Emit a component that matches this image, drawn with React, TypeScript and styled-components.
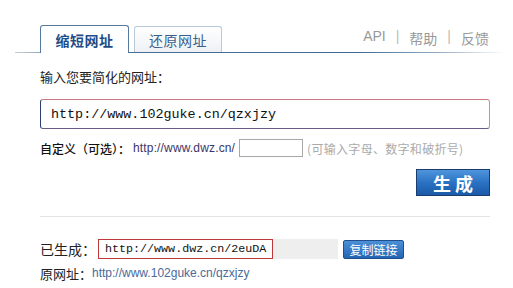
import styled, { createGlobalStyle } from "styled-components";

const GlobalStyle = createGlobalStyle`
    body {
        margin: 0;
        background: #fff;
        font-family: "Noto Sans CJK SC", "Liberation Sans", sans-serif;
        color: #222;
    }
`;

const Page = styled.div`
    width: 513px;
    height: 288px;
    overflow: hidden;
`;

const Header = styled.div`
    display: flex;
    align-items: flex-end;
    margin-left: 15px;
    width: 490px;
    height: 53px;
    padding-left: 25px;
    box-sizing: border-box;
    background: linear-gradient(to right, #c8d0d8 0%, #4a6f96 12%, #3f6893 70%, #9fb4c8 88%, #ffffff 100%) left bottom / 100% 1px no-repeat;
`;

const Tab = styled.div<{ active?: boolean }>`
    display: flex;
    align-items: center;
    justify-content: center;
    box-sizing: border-box;
    width: ${(p) => (p.active ? "89px" : "88px")};
    height: ${(p) => (p.active ? "28px" : "26px")};
    margin-right: 5px;
    margin-bottom: ${(p) => (p.active ? "0" : "1px")};
    border: 1px solid ${(p) => (p.active ? "#58799e" : "#b9c9d8")};
    border-bottom: none;
    border-radius: 3px 3px 0 0;
    background: ${(p) => (p.active ? "#fff" : "linear-gradient(#ffffff, #eef1f4)")};
    color: ${(p) => (p.active ? "#1e4c86" : "#3a5f8e")};
    font-size: 14px;
    font-weight: ${(p) => (p.active ? "bold" : "normal")};
    letter-spacing: 0.5px;
`;

const Links = styled.div`
    margin-left: auto;
    margin-right: 16px;
    margin-bottom: 5px;
    display: flex;
    gap: 10px;
    color: #999;
    font-size: 14px;
    font-family: "Liberation Sans", "Noto Sans CJK SC", sans-serif;
`;

const Sep = styled.span`
    color: #bbb;
`;

const Content = styled.div`
    padding-left: 40px;
    width: 450px;
`;

const Label = styled.div`
    margin-top: 15px;
    font-size: 13px;
    line-height: 18px;
`;

const UrlInput = styled.div`
    margin-top: 13px;
    height: 30px;
    box-sizing: border-box;
    display: flex;
    align-items: center;
    padding-left: 10px;
    border: 1px solid;
    border-radius: 3px;
    border-color: #c87a80 #b8a070 #6a5a88 #2d3f6e;
    background: #fff;
    font-family: "Liberation Mono", monospace;
    font-size: 13.4px;
    color: #111;
`;

const CustomRow = styled.div`
    margin-top: 10px;
    display: flex;
    align-items: center;
    height: 18px;
    font-size: 12px;
`;

const CustomLabel = styled.span`
    font-weight: 500;
    color: #111;
`;

const Domain = styled.span`
    font-family: "Liberation Sans", sans-serif;
    color: #3b3568;
    margin-left: 3px;
    letter-spacing: 0.15px;
`;

const SmallBox = styled.div`
    width: 64px;
    height: 18px;
    box-sizing: border-box;
    margin-left: 4px;
    border: 1px solid #a8a8a8;
    background: #fff;
`;

const Hint = styled.span`
    margin-left: 4px;
    color: #aaa;
    letter-spacing: 0.3px;
`;

const ButtonRow = styled.div`
    display: flex;
    justify-content: flex-end;
    margin-top: 12px;
`;

const MainButton = styled.div`
    width: 74px;
    height: 27px;
    box-sizing: border-box;
    display: flex;
    align-items: center;
    justify-content: center;
    border: 1px solid #1a3d6e;
    background: linear-gradient(#4f95dc 0%, #2b72c4 50%, #1a5aa8 100%);
    color: #fff;
    font-size: 18px;
    font-weight: bold;
    letter-spacing: 4px;
    padding-left: 4px;
`;

const Divider = styled.div`
    margin-top: 20px;
    height: 1px;
    background: #e4e4e4;
`;

const ResultRow = styled.div`
    margin-top: 22px;
    display: flex;
    align-items: center;
    height: 20px;
`;

const ResultLabel = styled.span`
    width: 58px;
    font-size: 14px;
`;

const ResultField = styled.div`
    display: flex;
    width: 240px;
    height: 20px;
    background: #eeeeee;
`;

const ResultText = styled.div`
    width: 175px;
    box-sizing: border-box;
    border: 1px solid #c0383c;
    background: #fff;
    display: flex;
    align-items: center;
    padding-left: 6px;
    font-family: "Liberation Mono", monospace;
    font-size: 11.7px;
    color: #111;
`;

const CopyButton = styled.div`
    margin-left: 5px;
    width: 61px;
    height: 19px;
    box-sizing: border-box;
    display: flex;
    align-items: center;
    justify-content: center;
    border: 1px solid #1f4f8e;
    border-radius: 2px;
    background: linear-gradient(#4b8fd6, #2566b4);
    color: #fff;
    font-size: 12px;
`;

const OriginRow = styled.div`
    margin-top: 4px;
    display: flex;
    align-items: center;
    height: 20px;
    font-size: 13px;
`;

const OriginLink = styled.span`
    font-family: "Liberation Sans", sans-serif;
    font-size: 12px;
    color: #4a6a9a;
`;

export default function App() {
    return (
        <Page>
            <GlobalStyle />
            <Header>
                <Tab active>缩短网址</Tab>
                <Tab>还原网址</Tab>
                <Links>
                    <span>API</span>
                    <Sep>|</Sep>
                    <span>帮助</span>
                    <Sep>|</Sep>
                    <span>反馈</span>
                </Links>
            </Header>
            <Content>
                <Label>输入您要简化的网址：</Label>
                <UrlInput>http://www.102guke.cn/qzxjzy</UrlInput>
                <CustomRow>
                    <CustomLabel>自定义（可选）：</CustomLabel>
                    <Domain>http://www.dwz.cn/</Domain>
                    <SmallBox />
                    <Hint>(可输入字母、数字和破折号)</Hint>
                </CustomRow>
                <ButtonRow>
                    <MainButton>生成</MainButton>
                </ButtonRow>
                <Divider />
                <ResultRow>
                    <ResultLabel>已生成：</ResultLabel>
                    <ResultField>
                        <ResultText>http://www.dwz.cn/2euDA</ResultText>
                    </ResultField>
                    <CopyButton>复制链接</CopyButton>
                </ResultRow>
                <OriginRow>
                    原网址：<OriginLink>http://www.102guke.cn/qzxjzy</OriginLink>
                </OriginRow>
            </Content>
        </Page>
    );
}
